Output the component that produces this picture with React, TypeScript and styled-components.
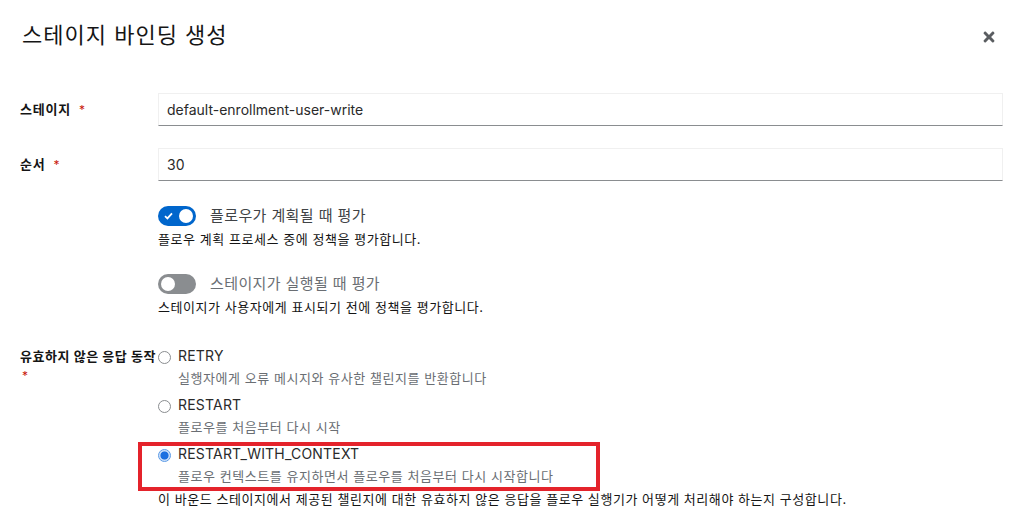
import React from "react";
import styled, { createGlobalStyle } from "styled-components";
import { FaTimes } from "react-icons/fa";

const Global = createGlobalStyle`
  html, body { margin: 0; padding: 0; background: #ffffff; }
  body {
    font-family: Inter, "Noto Sans CJK KR", sans-serif;
    color: #151515;
  }
  * { box-sizing: border-box; }
`;

const Modal = styled.div`
  width: 1024px;
  height: 525px;
  padding: 19px 21px 0 20px;
  overflow: hidden;
  background: #fff;
`;

const Header = styled.div`
  display: flex;
  align-items: center;
  justify-content: space-between;
  height: 32px;
`;

const Title = styled.h1`
  margin: 0 0 0 2px;
  font-size: 22px;
  font-weight: 400;
  letter-spacing: 1px;
  line-height: 32px;
  color: #151515;
`;

const CloseButton = styled.button`
  border: 0;
  background: transparent;
  padding: 0;
  margin: 4px 6px 0 0;
  display: flex;
  color: #5a5d61;
  cursor: pointer;
`;

const Form = styled.div`
  margin-top: 42px;
  display: flex;
  flex-direction: column;
`;

const Row = styled.div<{ $top: number; $align?: string }>`
  display: grid;
  grid-template-columns: 138px 1fr;
  align-items: ${(p) => p.$align || "center"};
  margin-top: ${(p) => p.$top}px;
`;

const Label = styled.label<{ $wrapReq?: boolean }>`
  font-size: 13px;
  font-weight: 700;
  letter-spacing: ${(p) => (p.$wrapReq ? "0.55px" : "0.8px")};
  line-height: 20px;
  color: #151515;
  white-space: nowrap;
  span {
    display: ${(p) => (p.$wrapReq ? "block" : "inline")};
    margin-left: ${(p) => (p.$wrapReq ? "2px" : "8px")};
  }
`;

const Req = styled.span`
  color: #c9190b;
  font-weight: 400;
  font-size: 12px;
`;

const Input = styled.input`
  height: 33px;
  width: 100%;
  border: 1px solid #f0f0f0;
  border-bottom-color: #8a8d90;
  padding: 0 8px;
  font-family: Inter, "Noto Sans CJK KR", sans-serif;
  font-size: 14px;
  color: #2a2a2a;
  outline: none;
  background: #fff;
`;

const Control = styled.div`
  display: flex;
  flex-direction: column;
`;

const SwitchRow = styled.div`
  display: flex;
  align-items: center;
  gap: 14px;
  height: 20px;
`;

const Track = styled.span<{ $on: boolean }>`
  position: relative;
  width: 38px;
  height: 20px;
  border-radius: 10px;
  background: ${(p) => (p.$on ? "#0066cc" : "#8a8d90")};
  flex: none;
  display: flex;
  align-items: center;
`;

const Knob = styled.span<{ $on: boolean }>`
  position: absolute;
  top: 3px;
  left: ${(p) => (p.$on ? "21px" : "3px")};
  width: 14px;
  height: 14px;
  border-radius: 50%;
  background: #fff;
`;

const CheckMark = styled.svg`
  position: absolute;
  left: 6px;
  top: 6px;
`;

const SwitchLabel = styled.span<{ $on: boolean }>`
  font-size: 15px;
  letter-spacing: 0.4px;
  line-height: 20px;
  color: ${(p) => (p.$on ? "#404346" : "#6a6e73")};
`;

const Helper = styled.div<{ $top: number; $muted?: boolean; $indent?: number }>`
  margin-top: ${(p) => p.$top}px;
  margin-left: ${(p) => p.$indent || 0}px;
  font-size: 13px;
  letter-spacing: 0.55px;
  line-height: 18px;
  color: ${(p) => (p.$muted ? "#6a6e73" : "#151515")};
  white-space: nowrap;
`;

const SwitchBlock = styled.div<{ $top: number }>`
  margin-top: ${(p) => p.$top}px;
  display: flex;
  flex-direction: column;
`;

const RadioList = styled.div`
  display: flex;
  flex-direction: column;
  gap: 8px;
`;

const RadioItem = styled.div`
  position: relative;
  display: flex;
  flex-direction: column;
`;

const RadioLine = styled.div`
  display: flex;
  align-items: center;
  gap: 7px;
  height: 20px;
`;

const RadioCircle = styled.span<{ $checked: boolean }>`
  width: 13px;
  height: 13px;
  border-radius: 50%;
  flex: none;
  margin-top: 2px;
  border: 1px solid ${(p) => (p.$checked ? "#5a9ae6" : "#8a8d90")};
  background: ${(p) =>
    p.$checked
      ? "radial-gradient(circle, #1a6fe0 0 3.6px, #b9d4f7 4.4px, #e9f1fc 6px)"
      : "#fff"};
`;

const RadioText = styled.span`
  font-size: 14px;
  letter-spacing: 0.2px;
  line-height: 20px;
  color: #2a2a2a;
`;

const Highlight = styled.div`
  position: absolute;
  left: -20px;
  top: -2px;
  width: 462px;
  bottom: -6px;
  border: 4px solid #e4232b;
  pointer-events: none;
`;

type SwitchProps = { on: boolean; label: string; desc: string; top: number };

const Switch = ({ on, label, desc, top }: SwitchProps) => (
  <SwitchBlock $top={top}>
    <SwitchRow>
      <Track $on={on}>
        {on && (
          <CheckMark width="9" height="8" viewBox="0 0 9 8">
            <path d="M1 4.2 L3.4 6.4 L8 1.4" fill="none" stroke="#fff" strokeWidth="1.8" />
          </CheckMark>
        )}
        <Knob $on={on} />
      </Track>
      <SwitchLabel $on={on}>{label}</SwitchLabel>
    </SwitchRow>
    <Helper $top={4}>{desc}</Helper>
  </SwitchBlock>
);

const options = [
  { value: "RETRY", desc: "실행자에게 오류 메시지와 유사한 챌린지를 반환합니다" },
  { value: "RESTART", desc: "플로우를 처음부터 다시 시작" },
  { value: "RESTART_WITH_CONTEXT", desc: "플로우 컨텍스트를 유지하면서 플로우를 처음부터 다시 시작합니다" },
];

export default function App() {
  const selected = "RESTART_WITH_CONTEXT";
  return (
    <>
      <Global />
      <Modal>
        <Header>
          <Title>스테이지 바인딩 생성</Title>
          <CloseButton aria-label="닫기">
            <FaTimes size={16} />
          </CloseButton>
        </Header>
        <Form>
          <Row $top={0}>
            <Label>
              스테이지<Req>*</Req>
            </Label>
            <Input defaultValue="default-enrollment-user-write" />
          </Row>
          <Row $top={22}>
            <Label>
              순서<Req>*</Req>
            </Label>
            <Input defaultValue="30" />
          </Row>
          <Row $top={0} $align="start">
            <div />
            <Control>
              <Switch on top={25} label="플로우가 계획될 때 평가" desc="플로우 계획 프로세스 중에 정책을 평가합니다." />
              <Switch
                on={false}
                top={26}
                label="스테이지가 실행될 때 평가"
                desc="스테이지가 사용자에게 표시되기 전에 정책을 평가합니다."
              />
            </Control>
          </Row>
          <Row $top={30} $align="start">
            <Label $wrapReq>
              유효하지 않은 응답 동작<Req>*</Req>
            </Label>
            <Control>
              <RadioList>
                {options.map((o) => (
                  <RadioItem key={o.value}>
                    <RadioLine>
                      <RadioCircle $checked={o.value === selected} />
                      <RadioText>{o.value}</RadioText>
                    </RadioLine>
                    <Helper $top={3} $muted $indent={20}>
                      {o.desc}
                    </Helper>
                    {o.value === selected && <Highlight />}
                  </RadioItem>
                ))}
              </RadioList>
              <Helper $top={5}>
                이 바운드 스테이지에서 제공된 챌린지에 대한 유효하지 않은 응답을 플로우 실행기가 어떻게 처리해야 하는지 구성합니다.
              </Helper>
            </Control>
          </Row>
        </Form>
      </Modal>
    </>
  );
}
